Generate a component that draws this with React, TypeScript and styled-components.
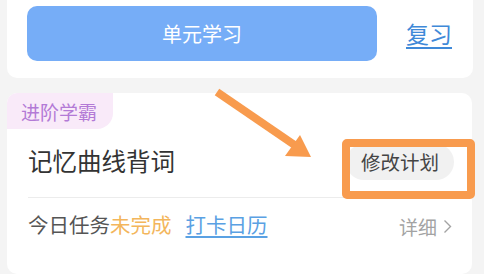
import React from 'react';
import styled, { createGlobalStyle } from 'styled-components';

const GlobalStyle = createGlobalStyle`
  html, body {
    margin: 0;
    padding: 0;
    height: 274px;
    overflow: hidden;
    background: #f4f4f4;
    font-family: "Noto Sans CJK SC", "Noto Sans", sans-serif;
  }
`;

const Page = styled.div`
  position: relative;
  width: 484px;
  height: 274px;
  overflow: hidden;
  display: flex;
  flex-direction: column;
  row-gap: 15px;
`;

const StudyCard = styled.div`
  margin: 0 11px 0 7px;
  background: #ffffff;
  border-radius: 0 0 10px 10px;
  padding: 6px 0 17px 20px;
  display: flex;
  align-items: center;
`;

const UnitButton = styled.div`
  width: 350px;
  height: 55px;
  border-radius: 10px;
  background: #76adf7;
  color: #ffffff;
  font-size: 20px;
  display: flex;
  align-items: center;
  justify-content: center;
`;

const ReviewLink = styled.span`
  margin-left: 29px;
  font-size: 23px;
  color: #3f89d8;
  text-decoration: underline;
  text-underline-offset: 4px;
  text-decoration-thickness: 2px;
  line-height: 1;
`;

const PlanCard = styled.div`
  margin: 0 12px 0 7px;
  background: #ffffff;
  border-radius: 10px;
  flex: 1;
  display: flex;
  flex-direction: column;
  align-items: flex-start;
`;

const LevelTag = styled.div`
  height: 36px;
  width: 106px;
  box-sizing: border-box;
  padding-left: 14px;
  display: flex;
  align-items: center;
  background: #f9eaf9;
  color: #b37ad6;
  font-size: 19px;
  border-radius: 10px 0 16px 0;
`;

const TitleRow = styled.div`
  align-self: stretch;
  height: 62px;
  padding: 0 18px 0 21px;
  display: flex;
  align-items: center;
  justify-content: space-between;
`;

const PlanTitle = styled.span`
  font-size: 24.5px;
  color: #333333;
`;

const EditButton = styled.span`
  height: 36px;
  padding: 0 15px;
  border-radius: 18px;
  background: #f1f1f1;
  color: #444444;
  font-size: 19.5px;
  display: flex;
  align-items: center;
  margin-top: 3px;
`;

const Divider = styled.div`
  align-self: stretch;
  height: 1px;
  margin: 6px 16px 0 21px;
  background: #ececec;
`;

const TaskRow = styled.div`
  align-self: stretch;
  height: 52px;
  padding: 0 20px 0 21px;
  display: flex;
  align-items: center;
  font-size: 20.5px;
`;

const TaskText = styled.span<{ $tone?: 'muted' | 'warn' }>`
  color: ${({ $tone }) => ($tone === 'warn' ? '#f3b65c' : '#555555')};
`;

const CalendarLink = styled.span`
  margin-left: 14px;
  color: #5aa1e3;
  text-decoration: underline;
  text-underline-offset: 3px;
`;

const Detail = styled.span`
  margin-left: auto;
  margin-top: 5px;
  display: flex;
  align-items: center;
  column-gap: 6px;
  color: #a3a3a3;
  font-size: 19px;
`;

const Annotation = styled.div`
  position: absolute;
  left: 342px;
  top: 139px;
  width: 133px;
  height: 60px;
  box-sizing: border-box;
  border: 8px solid #f89b4e;
  border-radius: 5px;
`;

const Arrow = styled.svg`
  position: absolute;
  left: 0;
  top: 0;
`;

const App: React.FC = () => (
  <>
    <GlobalStyle />
    <Page>
      <StudyCard>
        <UnitButton>单元学习</UnitButton>
        <ReviewLink>复习</ReviewLink>
      </StudyCard>
      <PlanCard>
        <LevelTag>进阶学霸</LevelTag>
        <TitleRow>
          <PlanTitle>记忆曲线背词</PlanTitle>
          <EditButton>修改计划</EditButton>
        </TitleRow>
        <Divider />
        <TaskRow>
          <TaskText>今日任务</TaskText>
          <TaskText $tone="warn">未完成</TaskText>
          <CalendarLink>打卡日历</CalendarLink>
          <Detail>
            详细
            <svg width="9" height="15" viewBox="0 0 9 15">
              <path d="M1.5 1.5 L7.5 7.5 L1.5 13.5" fill="none" stroke="#a3a3a3" strokeWidth="1.4" />
            </svg>
          </Detail>
        </TaskRow>
      </PlanCard>
      <Annotation />
      <Arrow width="484" height="274" viewBox="0 0 484 274">
        <line x1="217" y1="92" x2="296" y2="146" stroke="#f89b4e" strokeWidth="8" strokeLinecap="butt" />
        <polygon points="311,157 300,135 285,156" fill="#f89b4e" />
      </Arrow>
    </Page>
  </>
);

export default App;
